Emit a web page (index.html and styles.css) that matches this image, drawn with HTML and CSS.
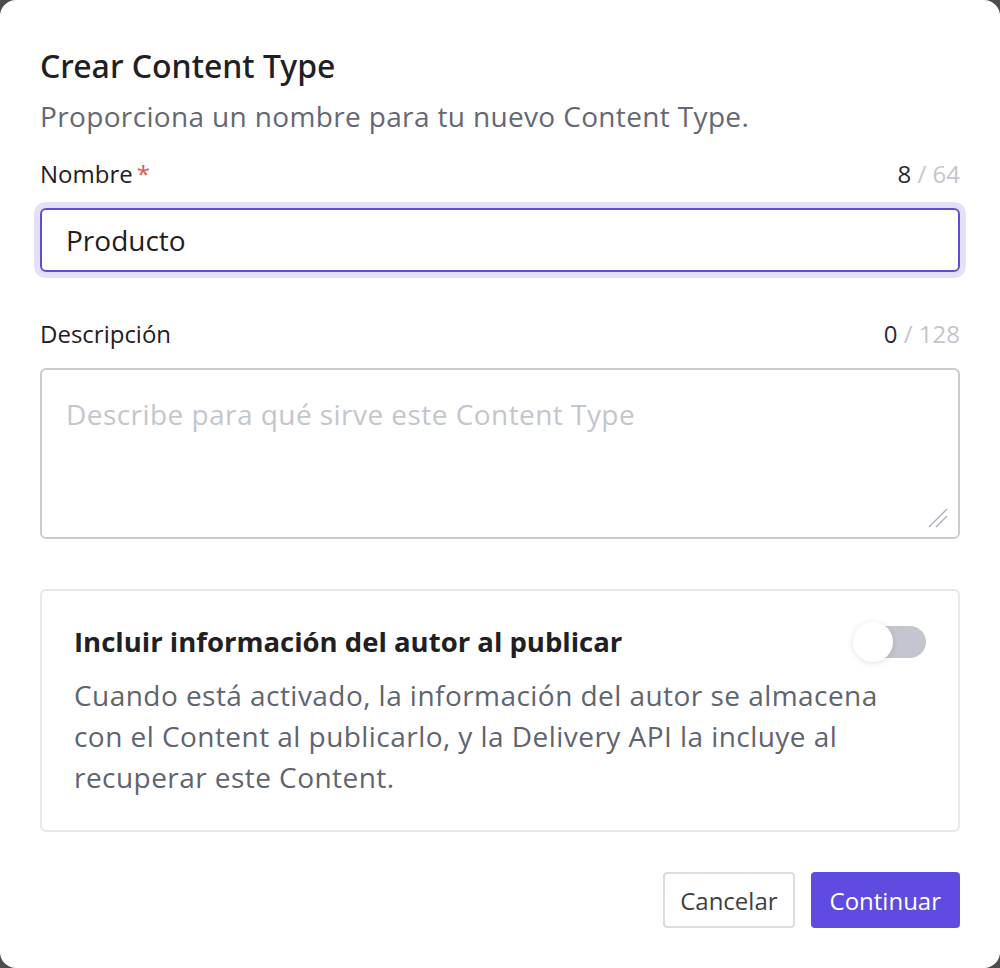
FILE: index.html
```html
<!DOCTYPE html>
<html lang="es">
<head>
<meta charset="utf-8">
<link rel="stylesheet" href="styles.css">
<title>Crear Content Type</title>
</head>
<body>
<div class="modal">
  <h1 class="title">Crear Content Type</h1>
  <p class="subtitle">Proporciona un nombre para tu nuevo Content Type.</p>

  <div class="field">
    <div class="field-head">
      <label class="label">Nombre<span class="req">*</span></label>
      <span class="count"><span class="cur">8</span> / 64</span>
    </div>
    <div class="input focused">Producto</div>
  </div>

  <div class="field field-desc">
    <div class="field-head">
      <label class="label">Descripción</label>
      <span class="count"><span class="cur">0</span> / 128</span>
    </div>
    <div class="textarea">
      <span class="placeholder">Describe para qué sirve este Content Type</span>
      <svg class="resize" width="20" height="20" viewBox="0 0 20 20"><path d="M19 1 L1 19 M19 8 L8 19" stroke="#a9adb4" stroke-width="1.3" fill="none"/></svg>
    </div>
  </div>

  <div class="card">
    <div class="card-head">
      <span class="card-title">Incluir información del autor al publicar</span>
      <span class="toggle"><span class="knob"></span></span>
    </div>
    <p class="card-text">Cuando está activado, la información del autor se almacena con el Content al publicarlo, y la Delivery API la incluye al recuperar este Content.</p>
  </div>

  <div class="actions">
    <button class="btn btn-secondary">Cancelar</button>
    <button class="btn btn-primary">Continuar</button>
  </div>
</div>
</body>
</html>
```

FILE: styles.css
```css
* { box-sizing: border-box; }
html, body { margin: 0; padding: 0; }
body {
  background: #4d4d4d;
  font-family: "Open Sans", "Noto Sans", sans-serif;
  color: #1f2023;
}
.modal {
  width: 1000px;
  height: 968px;
  background: #fff;
  border-radius: 16px;
  padding: 46px 40px 40px;
  display: flex;
  flex-direction: column;
}
.title {
  margin: 0;
  font-family: "Noto Sans", "Open Sans", sans-serif;
  font-size: 32px;
  line-height: 40px;
  font-weight: 500;
  color: #1f2023;
}
.subtitle {
  margin: 12px 0 0;
  font-size: 28px;
  line-height: 36px;
  color: #646873;
  letter-spacing: 0.35px;
}
.field { margin-top: 24px; }
.field-desc { margin-top: 46px; }
.field-head {
  display: flex;
  justify-content: space-between;
  align-items: baseline;
  font-size: 24px;
  line-height: 32px;
}
.label { color: #1f2023; }
.req { color: #e0574a; margin-left: 4px; }
.count { color: #c3c6cc; }
.count .cur { color: #2a2b2e; }
.input {
  margin-top: 18px;
  height: 64px;
  border: 2px solid #5c4fd3;
  border-radius: 6px;
  box-shadow: 0 0 0 6px #e4e0fa;
  padding: 0 24px;
  font-size: 28px;
  display: flex;
  align-items: center;
  color: #1f2023;
}
.textarea {
  position: relative;
  margin-top: 18px;
  height: 171px;
  border: 2px solid #c9ccd1;
  border-radius: 6px;
  padding: 24px 24px;
  font-size: 28px;
  line-height: 40px;
  letter-spacing: 0.45px;
}
.placeholder { color: #c3c6cc; }
.resize { position: absolute; right: 10px; bottom: 9px; }
.card {
  margin-top: 50px;
  border: 2px solid #e6e8eb;
  border-radius: 6px;
  padding: 32px 32px 32px;
}
.card-head {
  display: flex;
  justify-content: space-between;
  align-items: center;
}
.card-title {
  font-size: 27.5px;
  font-weight: 700;
  color: #1f2023;
}
.toggle {
  position: relative;
  width: 72px;
  height: 32px;
  border-radius: 16px;
  background: #c3c6ce;
  flex: none;
}
.knob {
  position: absolute;
  left: -1px;
  top: -4px;
  width: 40px;
  height: 40px;
  border-radius: 50%;
  background: #fff;
  box-shadow: 0 1px 6px rgba(0,0,0,0.12);
}
.card-text {
  margin: 15px 0 0;
  font-size: 28px;
  line-height: 41px;
  color: #5f6470;
  letter-spacing: 0.45px;
}
.actions {
  margin-top: auto;
  display: flex;
  justify-content: flex-end;
  gap: 16px;
}
.btn {
  height: 56px;
  border-radius: 4px;
  font-family: inherit;
  font-size: 24px;
  cursor: pointer;
}
.btn-secondary {
  background: #fff;
  border: 2px solid #dcdde0;
  color: #3d3f44;
  padding: 0 15px;
}
.btn-primary {
  background: #604be0;
  border: 2px solid #604be0;
  color: #fff;
  padding: 0 17px;
}
```
